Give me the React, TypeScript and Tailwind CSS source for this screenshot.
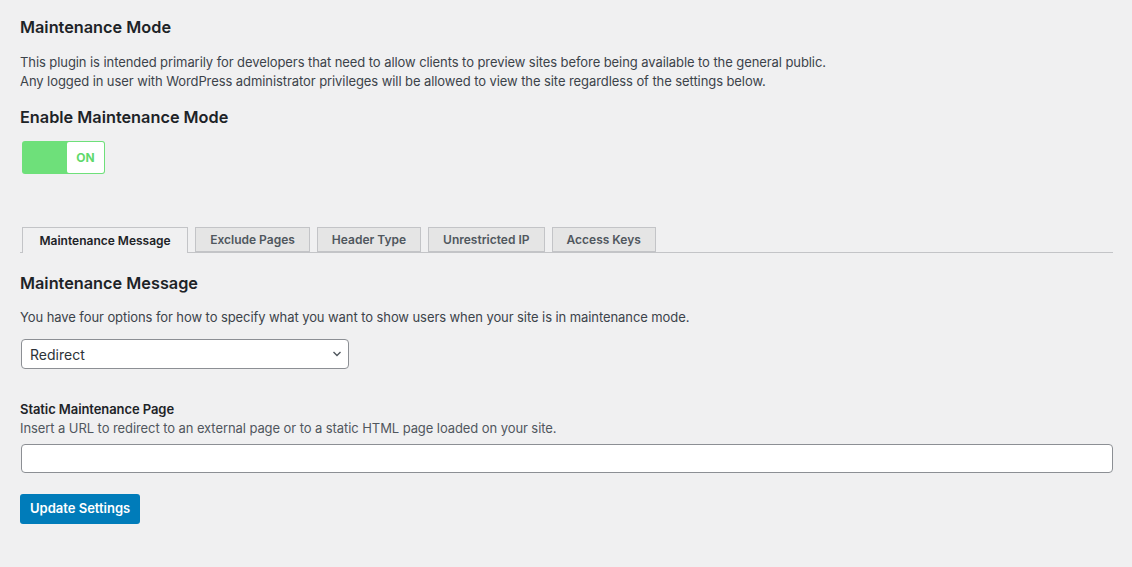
import React from 'react';

const tabs = ['Maintenance Message', 'Exclude Pages', 'Header Type', 'Unrestricted IP', 'Access Keys'];

const App: React.FC = () => {
  return (
    <div
      className="min-h-[567px] bg-[#f0f0f1] pl-5 pr-[19px] pt-[16px] text-[#3c434a]"
      style={{ fontFamily: 'Inter, "Noto Sans", sans-serif' }}
    >
      <h2 className="text-[16.3px] font-semibold leading-[23px] text-[#1d2327]">Maintenance Mode</h2>
      <p className="mt-[14px] text-[13px] leading-[19px] tracking-[-0.08px]">
        This plugin is intended primarily for developers that need to allow clients to preview sites before being available to the general public.
        <br />
        Any logged in user with WordPress administrator privileges will be allowed to view the site regardless of the settings below.
      </p>

      <h2 className="mt-[15px] text-[16.3px] font-semibold leading-[23px] text-[#1d2327]">Enable Maintenance Mode</h2>

      {/* Toggle */}
      <div className="ml-[2px] mt-[12px] flex h-[33px] w-[83px] justify-end rounded-[3px] bg-[#6ee07a] p-px">
        <div className="flex w-[37px] items-center justify-center rounded-[2px] bg-white text-[12px] font-bold text-[#5fd96c]">
          ON
        </div>
      </div>

      {/* Tabs */}
      <div className="mt-[53px] flex gap-[7px] border-b border-[#c3c4c7] pl-[2px]">
        {tabs.map((tab, i) => (
          <div
            key={tab}
            className={
              i === 0
                ? '-mb-px flex h-[26px] items-center border border-b-0 border-[#c3c4c7] bg-[#f0f0f1] px-[16.5px] text-[12px] font-semibold text-[#1d2327]'
                : 'flex h-[25px] items-center border border-[#c3c4c7] bg-[#e5e5e5] px-[14px] text-[12px] font-semibold text-[#50575e]'
            }
          >
            {tab}
          </div>
        ))}
      </div>

      <h2 className="mt-[19px] text-[16.3px] font-semibold leading-[23px] text-[#1d2327]">Maintenance Message</h2>
      <p className="mt-[13px] text-[13px] leading-[19px] tracking-[-0.08px]">
        You have four options for how to specify what you want to show users when your site is in maintenance mode.
      </p>

      <div className="ml-px mt-[12px] flex h-[30px] w-[328px] items-center justify-between rounded-[4px] border border-[#8c8f94] bg-white pl-2 pr-[5px] text-[14px] text-[#2c3338]">
        <span>Redirect</span>
        <svg width="12" height="12" viewBox="0 0 12 12" fill="none">
          <path d="M2.5 4L6 7.5L9.5 4" stroke="#50575e" strokeWidth="1.4" />
        </svg>
      </div>

      <div className="mt-[31px] text-[13px] font-semibold leading-[19px] tracking-[-0.08px] text-[#1d2327]">Static Maintenance Page</div>
      <p className="text-[13px] leading-[19px] tracking-[-0.08px] text-[#50575e]">
        Insert a URL to redirect to an external page or to a static HTML page loaded on your site.
      </p>
      <input
        type="text"
        className="ml-px mt-[6px] block h-[29px] w-[calc(100%-1px)] rounded-[4px] border border-[#8c8f94] bg-white px-2 text-[14px]"
      />

      <button className="mt-[21px] h-[30px] rounded-[3px] bg-[#007cba] px-[10px] text-[13px] font-semibold text-white">
        Update Settings
      </button>
    </div>
  );
};

export default App;
